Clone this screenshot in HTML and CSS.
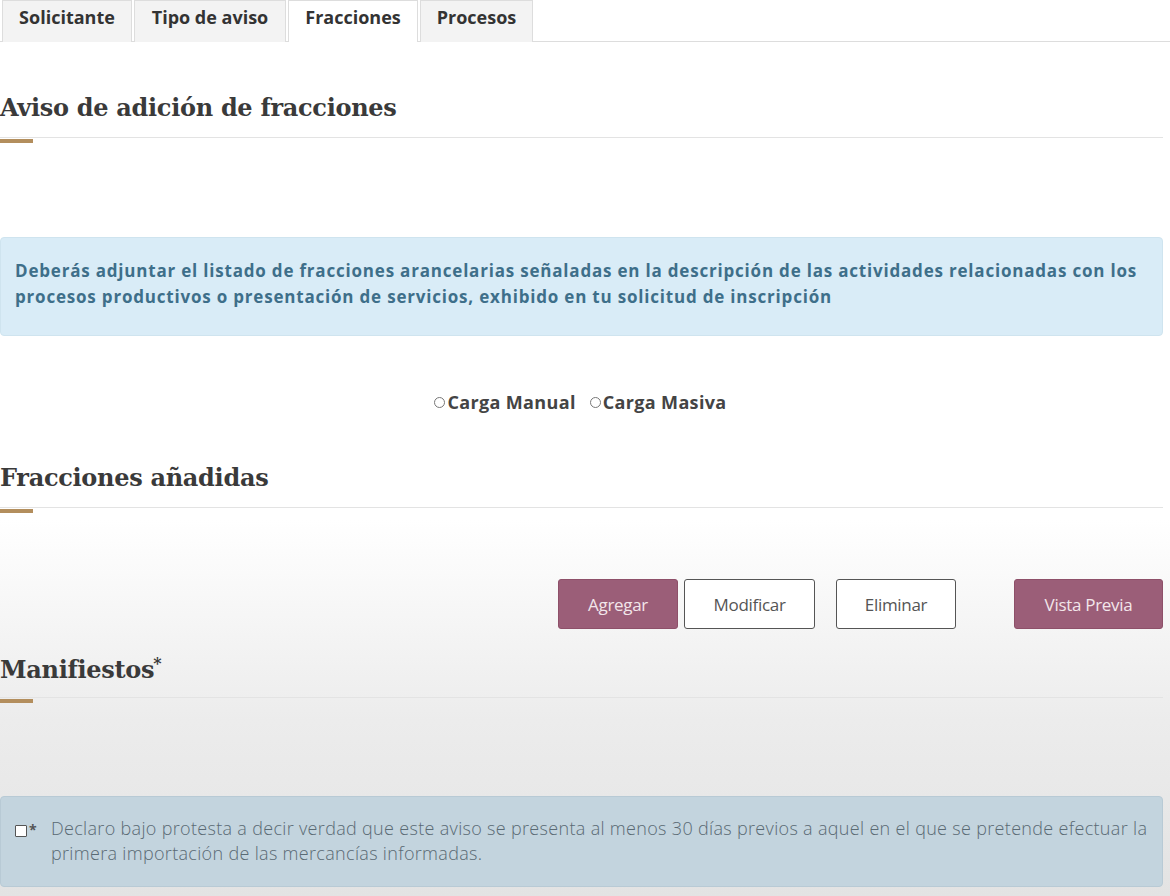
FILE: index.html
```html
<!DOCTYPE html>
<html lang="es">
<head>
<meta charset="utf-8">
<title>Aviso de adición de fracciones</title>
<link rel="stylesheet" href="styles.css">
</head>
<body>
<div class="page">
  <ul class="tabs">
    <li class="tab">Solicitante</li>
    <li class="tab">Tipo de aviso</li>
    <li class="tab active">Fracciones</li>
    <li class="tab">Procesos</li>
  </ul>

  <section class="section first">
    <h2 class="title">Aviso de adición de fracciones</h2>
    <div class="rule"><span class="gold"></span></div>
  </section>

  <div class="alert info">
    Deberás adjuntar el listado de fracciones arancelarias señaladas en la descripción de las actividades relacionadas con los procesos productivos o presentación de servicios, exhibido en tu solicitud de inscripción
  </div>

  <div class="radios">
    <label class="radio"><span class="circle"></span>Carga Manual</label>
    <label class="radio"><span class="circle"></span>Carga Masiva</label>
  </div>

  <section class="section added">
    <h2 class="title">Fracciones añadidas</h2>
    <div class="rule"><span class="gold"></span></div>
  </section>

  <div class="buttons">
    <button class="btn primary">Agregar</button>
    <button class="btn outline">Modificar</button>
    <button class="btn outline ml">Eliminar</button>
    <button class="btn primary big">Vista Previa</button>
  </div>

  <section class="section manif">
    <h2 class="title">Manifiestos<sup class="star">*</sup></h2>
    <div class="rule"><span class="gold"></span></div>
  </section>

  <div class="alert check">
    <span class="box"></span><span class="req">*</span>
    <p>Declaro bajo protesta a decir verdad que este aviso se presenta al menos 30 días previos a aquel en el que se pretende efectuar la primera importación de las mercancías informadas.</p>
  </div>
</div>
</body>
</html>
```

FILE: styles.css
```css
html, body {
  margin: 0;
  padding: 0;
}
body {
  width: 1170px;
  height: 896px;
  overflow: hidden;
  font-family: "Open Sans", "Liberation Sans", sans-serif;
  color: #333;
  background: linear-gradient(to bottom, #ffffff 0, #ffffff 520px, #ececec 720px, #e3e3e3 896px);
}
.page {
  padding-right: 7px;
}
.tabs {
  list-style: none;
  margin: 0;
  padding: 0 0 0 2px;
  display: flex;
  gap: 2px;
  border-bottom: 1px solid #dddddd;
  height: 41px;
  margin-right: -7px;
}
.tab {
  box-sizing: border-box;
  height: 42px;
  display: flex;
  align-items: center;
  justify-content: center;
  font-weight: 700;
  font-size: 18px;
  color: #333;
  background: #f3f3f3;
  border: 1px solid #dddddd;
  border-bottom: none;
  padding-bottom: 9px;
}
.tab:nth-child(1) { width: 130px; }
.tab:nth-child(2) { width: 152px; }
.tab:nth-child(3) { width: 130px; }
.tab:nth-child(4) { width: 113px; }
.tab.active {
  background: #fff;
}
.section {
  margin: 0;
}
.first {
  padding-top: 50px;
}
.title {
  margin: 0;
  font-family: "DejaVu Serif", "Liberation Serif", serif;
  font-weight: 700;
  font-size: 24px;
  line-height: 32px;
  color: #3a3a3a;
  letter-spacing: -0.3px;
}
.rule {
  margin-top: 13px;
  height: 1px;
  background: #e3e3e3;
  position: relative;
}
.gold {
  position: absolute;
  left: 0;
  top: 2px;
  width: 33px;
  height: 4px;
  background: #b38e5d;
}
.alert {
  box-sizing: border-box;
  border-radius: 4px;
}
.info {
  margin-top: 99px;
  height: 99px;
  background: #d9ecf7;
  border: 1px solid #cfe4ef;
  padding: 20px 12px 0 14px;
  font-size: 17px;
  font-weight: 700;
  line-height: 26px;
  letter-spacing: 0.8px;
  color: #3e6f8a;
}
.radios {
  margin-top: 54px;
  display: flex;
  justify-content: center;
  gap: 14px;
  padding-right: 2px;
}
.radio {
  display: flex;
  align-items: center;
  font-weight: 700;
  font-size: 18px;
  letter-spacing: 0.35px;
  color: #444;
}
.circle {
  width: 9px;
  height: 9px;
  border: 1px solid #777;
  border-radius: 50%;
  margin-right: 2px;
}
.added {
  margin-top: 48px;
}
.buttons {
  margin-top: 71px;
  display: flex;
  justify-content: flex-end;
  gap: 6px;
}
.btn {
  box-sizing: border-box;
  height: 50px;
  font-family: "Open Sans", "Liberation Sans", sans-serif;
  font-size: 17px;
  letter-spacing: -0.3px;
  border-radius: 3px;
  padding: 0;
}
.primary {
  background: #9b5e78;
  border: 1px solid #8e5069;
  color: #f2e6ea;
  width: 120px;
}
.outline {
  background: #fff;
  border: 1px solid #555;
  color: #555;
  width: 131px;
}
.outline.ml {
  margin-left: 15px;
  width: 120px;
}
.big {
  width: 149px;
  margin-left: 52px;
}
.manif {
  margin-top: 25px;
}
.manif .rule {
  margin-top: 11px;
}
.star {
  font-size: 16px;
  vertical-align: top;
  position: relative;
  top: -6px;
  margin-left: -1px;
}
.check {
  margin-top: 98px;
  height: 91px;
  background: #c3d4de;
  border: 1px solid #b8cad5;
  display: flex;
  align-items: flex-start;
  padding: 19px 10px 0 14px;
  font-size: 18px;
  font-weight: 300;
  letter-spacing: 0.32px;
  color: #5a6a74;
  line-height: 25px;
}
.box {
  flex: none;
  width: 10px;
  height: 10px;
  border: 1px solid #555;
  background: #fff;
  margin-top: 9px;
  border-radius: 1px;
}
.req {
  flex: none;
  color: #555;
  font-weight: 700;
  font-size: 14px;
  margin: 1px 14px 0 2px;
}
.check p {
  margin: 0;
}
```
